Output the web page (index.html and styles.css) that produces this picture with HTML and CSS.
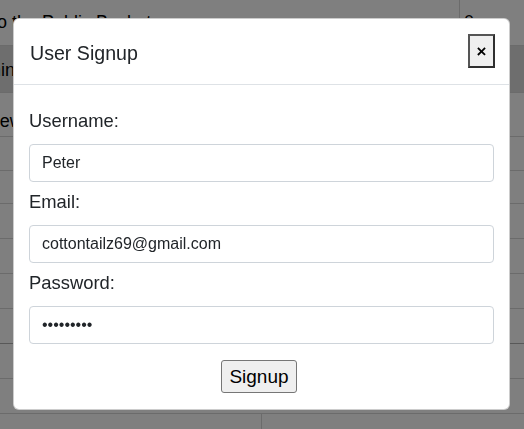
FILE: index.html
```html
<!DOCTYPE html>
<html lang="en">
<head>
<meta charset="utf-8">
<title>User Signup</title>
<link rel="stylesheet" href="styles.css">
</head>
<body>
<div class="page">
  <div class="row r1"><div class="cell c-main"><span class="title-cut">Upload to the Public Bucket</span></div><div class="cell c-num">0</div></div>
  <div class="row r2 band"><div class="cell c-main"><span class="cut2">Admin.</span></div><div class="cell c-num"></div></div>
  <div class="row r3"><div class="cell c-main"><span class="cut3">View</span></div><div class="cell c-num"></div></div>
  <div class="row h34"></div>
  <div class="row h33"></div>
  <div class="row h35"></div>
  <div class="row h35"></div>
  <div class="row h35"></div>
  <div class="row h35 strong"></div>
  <div class="row h35"></div>
  <div class="row h35"></div>
  <div class="row last"><div class="cell half"></div><div class="cell half"></div></div>
</div>

<div class="backdrop"></div>

<div class="modal">
  <div class="modal-header">
    <h5 class="modal-title">User Signup</h5>
    <button class="close-btn" type="button">&times;</button>
  </div>
  <form class="modal-body">
    <label class="field-label" for="u">Username:</label>
    <input class="field" id="u" type="text" value="Peter">
    <label class="field-label" for="e">Email:</label>
    <input class="field" id="e" type="text" value="cottontailz69@gmail.com">
    <label class="field-label" for="p">Password:</label>
    <input class="field" id="p" type="password" value="123456789">
    <div class="actions"><button class="submit" type="button">Signup</button></div>
  </form>
</div>
</body>
</html>
```
FILE: styles.css
```css
* { box-sizing: border-box; }
html, body { margin: 0; padding: 0; }
body {
  font-family: "Liberation Sans", Arial, sans-serif;
  color: #212529;
  background: #fff;
  width: 524px;
  height: 429px;
  overflow: hidden;
}
.page {
  display: flex;
  flex-direction: column;
  height: 429px;
  overflow: hidden;
}
.row {
  display: flex;
  border-bottom: 1px solid #d6d6d6;
  flex: none;
}
.r1 { height: 46px; }
.r2 { height: 47px; }
.r3 { height: 44px; }
.h34 { height: 34px; }
.h33 { height: 33px; }
.h35 { height: 35px; }
.strong { border-bottom-color: #b0b0b0; }
.last { height: 16px; border-bottom: none; }
.band { background: #dcdcdc; }
.cell { overflow: hidden; white-space: nowrap; font-size: 18px; color: #000; }
.c-main { width: 460px; border-right: 1px solid #d6d6d6; padding-top: 12px; }
.c-num { flex: 1; padding: 12px 0 0 4px; }
.r2 .c-main, .r3 .c-main { border-right: none; }
.r2 .c-num, .r3 .c-num { border: none; }
.title-cut { display: inline-block; text-indent: -70px; }
.cut2 { display: inline-block; text-indent: -36px; padding-top: 2px; }
.cut3 { display: inline-block; text-indent: -16px; padding-top: 6px; }
.half { width: 264px; }
.half:first-child { border-right: 1px solid #d6d6d6; }

.backdrop {
  position: fixed;
  inset: 0;
  background: rgba(0, 0, 0, 0.5);
}

.modal {
  position: fixed;
  left: 13px;
  top: 18px;
  width: 497px;
  background: #fff;
  border: 1px solid rgba(0, 0, 0, 0.2);
  border-radius: 6px;
  display: flex;
  flex-direction: column;
}
.modal-header {
  display: flex;
  align-items: flex-start;
  justify-content: space-between;
  padding: 15px 14px 16px 16px;
  border-bottom: 1px solid #dee2e6;
}
.modal-title {
  margin: 5px 0 0;
  font-size: 19.6px;
  font-weight: 400;
  line-height: 1.5;
}
.close-btn {
  width: 27px;
  height: 34px;
  padding: 0;
  background: #efefef;
  border: 2px solid #2f2f2f;
  border-top-color: #555;
  border-left-color: #555;
  font-family: "Liberation Sans", Arial, sans-serif;
  font-size: 17px;
  font-weight: 700;
  line-height: 1;
  color: #000;
}
.modal-body {
  display: flex;
  flex-direction: column;
  padding: 16px 15px 16px 15px;
  margin: 0;
}
.field-label {
  display: block;
  font-size: 18.4px;
  line-height: 27px;
  margin: 6px 0 10px;
}
.field {
  display: block;
  width: 100%;
  height: 38px;
  padding: 6px 12px;
  font-family: "Liberation Sans", Arial, sans-serif;
  font-size: 16px;
  color: #212529;
  background: #fff;
  border: 1px solid #ced4da;
  border-radius: 4px;
  outline: none;
}
.actions {
  display: flex;
  justify-content: center;
  margin-top: 16px;
  padding-right: 5px;
}
.submit {
  width: 76px;
  height: 33px;
  padding: 0;
  font-family: "Liberation Sans", Arial, sans-serif;
  font-size: 19px;
  color: #000;
  background: #efefef;
  border: 1px solid #767676;
  border-radius: 3px;
}
```
